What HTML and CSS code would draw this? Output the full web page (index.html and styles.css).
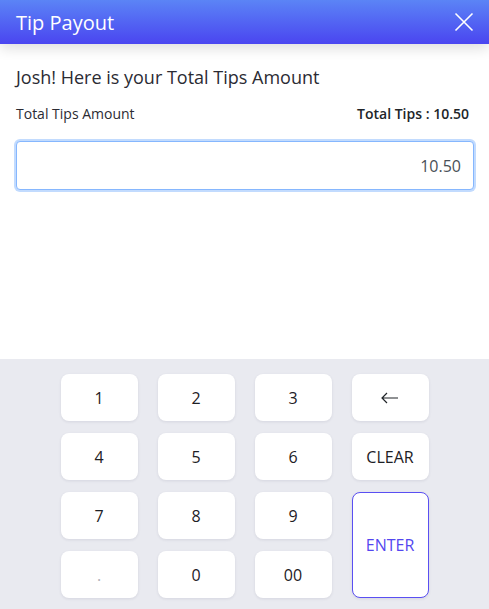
FILE: index.html
```html
<!DOCTYPE html>
<html lang="en">

<head>
  <meta charset="UTF-8">
  <meta name="viewport" content="width=device-width, initial-scale=1.0">
  <title>Tip Payout</title>
  <link rel="stylesheet" href="styles.css">
</head>

<body>
  <div class="modal">
    <header class="modal-header">
      <h1>Tip Payout</h1>
      <button class="close" type="button" aria-label="Close">
        <svg width="20" height="20" viewBox="0 0 20 20">
          <path d="M1.5 1.5 L18.5 18.5 M18.5 1.5 L1.5 18.5" stroke="#fff" stroke-width="1.6" fill="none" />
        </svg>
      </button>
    </header>

    <main class="modal-body">
      <p class="greeting">Josh! Here is your Total Tips Amount</p>
      <div class="summary">
        <span>Total Tips Amount</span>
        <strong>Total Tips : 10.50</strong>
      </div>
      <input class="amount" type="text" value="10.50">
    </main>

    <!-- 数字键盘 -->
    <section class="keypad">
      <button class="key">1</button>
      <button class="key">2</button>
      <button class="key">3</button>
      <button class="key" aria-label="Backspace">
        <svg width="18" height="12" viewBox="0 0 18 12">
          <path d="M1 6 H17 M6 1 L1 6 L6 11" stroke="#212529" stroke-width="1.2" fill="none" />
        </svg>
      </button>
      <button class="key">4</button>
      <button class="key">5</button>
      <button class="key">6</button>
      <button class="key">CLEAR</button>
      <button class="key">7</button>
      <button class="key">8</button>
      <button class="key">9</button>
      <button class="key enter">ENTER</button>
      <button class="key dot">.</button>
      <button class="key">0</button>
      <button class="key">00</button>
    </section>
  </div>
</body>

</html>
```

FILE: styles.css
```css
* {
  box-sizing: border-box;
}

body {
  margin: 0;
  font-family: "Open Sans", "Noto Sans", sans-serif;
  color: #212529;
  background-color: #fff;
}

.modal {
  height: 609px;
  display: flex;
  flex-direction: column;
}

/* 顶部标题栏 */
.modal-header {
  height: 44px;
  padding: 0 15px 0 16px;
  display: flex;
  align-items: center;
  justify-content: space-between;
  background: linear-gradient(to bottom, #5b84f6, #4a45f0);
  box-shadow: 0 4px 14px rgba(0, 0, 0, 0.14);
  position: relative;
  z-index: 2;
}

.modal-header h1 {
  margin: 0;
  font-size: 20px;
  font-weight: 400;
  color: #fff;
}

.close {
  display: flex;
  padding: 0;
  border: none;
  background: none;
  cursor: pointer;
}

.modal-body {
  flex: 1;
  padding: 20px 15px 0 16px;
}

.greeting {
  margin: 0;
  font-size: 18px;
  line-height: 26px;
  color: #2b2b33;
}

.summary {
  margin-top: 13px;
  display: flex;
  justify-content: space-between;
  font-size: 14px;
  line-height: 22px;
  padding-right: 5px;
}

.summary span {
  color: #2b2b33;
}

.summary strong {
  font-weight: 600;
  color: #212529;
}

.amount {
  display: block;
  width: 458px;
  height: 49px;
  margin: 16px 0 0 0;
  padding: 0 12px;
  border: 1px solid #86b7fe;
  border-radius: 4px;
  box-shadow: 0 0 0 2px #c2dbfe;
  outline: none;
  text-align: right;
  font-family: inherit;
  font-size: 16px;
  color: #495057;
}

/* 键盘区域 */
.keypad {
  height: 250px;
  padding: 15px 0 11px;
  background-color: #e9eaf0;
  display: grid;
  grid-template-columns: repeat(4, 77px);
  grid-auto-rows: 47px;
  column-gap: 20px;
  row-gap: 12px;
  justify-content: center;
}

.key {
  display: flex;
  align-items: center;
  justify-content: center;
  border: 1px solid transparent;
  border-radius: 8px;
  background-color: #fff;
  box-shadow: 0 1px 3px rgba(40, 40, 80, 0.1);
  font-family: inherit;
  font-size: 16px;
  font-weight: 500;
  color: #1d2025;
  cursor: pointer;
}

.key.dot {
  color: #b0b0b8;
}

.key.enter {
  grid-column: 4;
  grid-row: 3 / span 2;
  border-color: #5a4ff2;
  color: #5447f0;
}
```
